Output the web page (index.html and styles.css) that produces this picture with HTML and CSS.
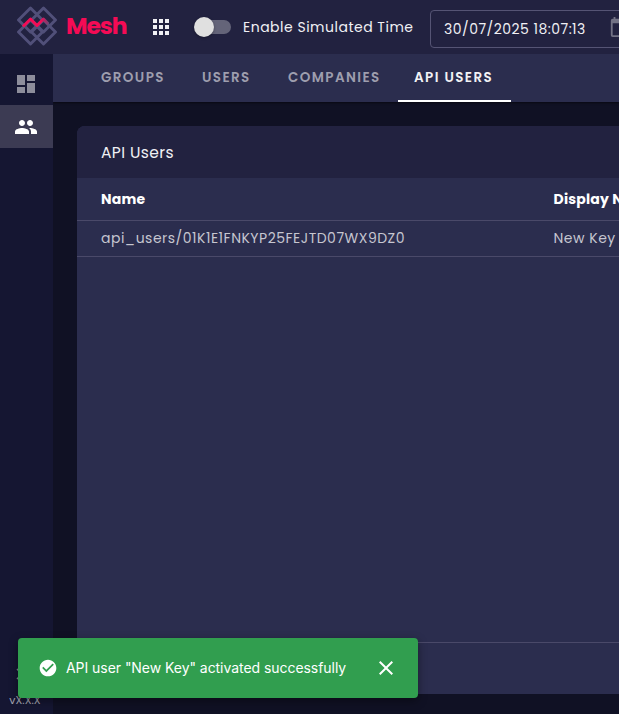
FILE: index.html
```html
<!DOCTYPE html>
<html lang="en">
<head>
<meta charset="utf-8">
<title>Mesh</title>
<link rel="stylesheet" href="styles.css">
</head>
<body>
<div class="app">
  <header class="topbar">
    <svg class="logo" viewBox="0 0 42 40" fill="none" stroke-linejoin="round">
      <defs><linearGradient id="fade" gradientUnits="userSpaceOnUse" x1="25" y1="0" x2="34" y2="0"><stop stop-color="#f50b55"/><stop offset="1" stop-color="#515079"/></linearGradient></defs>
      <g stroke="#515079" stroke-width="2.9">
        <path d="M14.500 2 26.500 14 14.500 26 2.500 14Z"/>
        <path d="M27.500 2 39.500 14 27.500 26 15.500 14Z"/>
        <path d="M14.500 14 26.500 26 14.500 38 2.500 26Z"/>
        <path d="M27.500 14 39.500 26 27.500 38 15.500 26Z"/>
      </g>
      <path d="M7 20.500 14.500 13 21 19.500 27.500 13 32.500 18" stroke="url(#fade)" stroke-width="2.9"/>
    </svg>
    <span class="brand">Mesh</span>
    <svg class="apps" viewBox="0 0 16 16" fill="#fff"><path d="M0 0h4v4H0zM6 0h4v4H6zM12 0h4v4h-4zM0 6h4v4H0zM6 6h4v4H6zM12 6h4v4h-4zM0 12h4v4H0zM6 12h4v4H6zM12 12h4v4h-4z"/></svg>
    <span class="switch"><span class="knob"></span></span>
    <span class="switch-label">Enable Simulated Time</span>
    <div class="date-field">
      <span class="date">30/07/2025 18:07:13</span>
      <svg class="calendar" viewBox="0 0 24 24"><path fill-rule="evenodd" d="M20 3h-1V1h-2v2H7V1H5v2H4Q2 3 2 5v16q0 2 2 2h16q2 0 2-2V5q0-2-2-2zM4 8h16v13H4z"/></svg>
    </div>
  </header>
  <div class="body">
    <aside class="sidebar">
      <a class="side-item"><svg viewBox="0 0 24 24"><path d="M3 13h8V3H3v10zm0 8h8v-6H3v6zm10 0h8V11h-8v10zm0-18v6h8V3h-8z"/></svg></a>
      <a class="side-item selected"><svg viewBox="0 0 24 24"><path d="M16 11c1.660 0 2.990-1.340 2.990-3S17.660 5 16 5s-3 1.340-3 3 1.340 3 3 3zm-8 0c1.660 0 2.990-1.340 2.990-3S9.660 5 8 5 5 6.340 5 8s1.340 3 3 3zm0 2c-2.330 0-7 1.170-7 3.500V19h14v-2.500c0-2.330-4.670-3.500-7-3.500zm8 0c-.29 0-.62.020-.97.050 1.160.84 1.970 1.970 1.970 3.450V19h6v-2.500c0-2.330-4.670-3.500-7-3.500z"/></svg></a>
      <div class="side-foot">
        <svg class="expand" viewBox="0 0 12 12" fill="none"><path d="m1 1 5 5-5 5M6 1l5 5-5 5"/></svg>
        <span class="version">vX.X.X</span>
      </div>
    </aside>
    <main class="main">
      <nav class="tabs">
        <a class="tab groups">GROUPS</a>
        <a class="tab users">USERS</a>
        <a class="tab companies">COMPANIES</a>
        <a class="tab api active">API USERS</a>
      </nav>
      <section class="card">
        <h1 class="card-title"><span>API Users</span></h1>
        <div class="row head"><span class="name">Name</span><span class="display">Display Name</span></div>
        <div class="row"><span class="name">api_users/01K1E1FNKYP25FEJTD07WX9DZ0</span><span class="display">New Key</span></div>
        <div class="card-foot"></div>
      </section>
    </main>
  </div>
</div>
<div class="toast">
  <svg class="check" viewBox="0 0 24 24"><path d="M12 2C6.480 2 2 6.480 2 12s4.480 10 10 10 10-4.480 10-10S17.520 2 12 2zm-2 15-5-5 1.410-1.410L10 14.170l7.590-7.590L19 8l-9 9z"/></svg>
  <span class="message">API user "New Key" activated successfully</span>
  <svg class="close" viewBox="0 0 24 24"><path d="M19 6.410 17.590 5 12 10.590 6.410 5 5 6.410 10.590 12 5 17.590 6.410 19 12 13.410 17.590 19 19 17.590 13.410 12z"/></svg>
</div>
</body>
</html>
```
FILE: styles.css
```css
* { box-sizing: border-box; }
body {
  margin: 0;
  overflow: hidden;
  background: #101124;
  color: #f0f0f4;
  font: 14px/20px Poppins, Inter, "Liberation Sans", sans-serif;
}
svg { display: block; flex: none; fill: currentColor; }
.app { width: 619px; height: 714px; display: flex; flex-direction: column; overflow: hidden; }
.topbar { height: 54px; flex: none; display: flex; align-items: center; padding-left: 16px; background: #222240; white-space: nowrap; }
.topbar > * { flex: none; }
.logo { width: 42px; height: 40px; fill: none; margin-bottom: 2px; }
.brand { width: 62px; margin-left: 8px; color: #f50b55; font-size: 23.5px; line-height: 30px; font-weight: 700; letter-spacing: -1.1px; margin-bottom: 2px; }
.apps { width: 16px; height: 16px; margin-left: 25px; }
.switch { width: 37px; height: 20px; margin-left: 25px; display: flex; align-items: center; }
.switch::after { content: ""; width: 27px; height: 14px; margin-left: -10px; border-radius: 0 7px 7px 0; background: #646479; }
.knob { width: 20px; height: 20px; flex: none; border-radius: 50%; background: #e0e0e0; box-shadow: 0 1px 3px #0005; z-index: 1; }
.switch-label { width: 171px; margin-left: 12px; letter-spacing: .5px; }
.date-field { width: 230px; height: 38px; display: flex; align-items: center; margin: 3px 0 0 16px; padding-left: 13px; border: 1px solid #555474; border-radius: 4px; }
.date { width: 143px; flex: none; letter-spacing: .48px; }
.calendar { width: 22px; height: 22px; margin: 0 0 3px 22px; color: #737386; }
.body { flex: 1; min-height: 0; display: flex; }
.sidebar { width: 53px; flex: none; display: flex; flex-direction: column; padding-top: 8px; background: #151632; }
.side-item { height: 43px; display: flex; align-items: center; padding-left: 14px; color: #8d8d9b; }
.side-item svg { width: 24px; height: 24px; }
.selected { background: #3c3b53; color: #fff; }
.side-foot { margin-top: auto; padding-bottom: 4px; text-align: center; font-size: 11px; color: #a4a4b0; }
.expand { width: 12px; height: 12px; margin: 0 0 10px 16px; fill: none; stroke: #858594; stroke-width: 1.5; }
.version { display: block; margin-right: 3px; }
.main { flex: 1; min-width: 0; overflow: hidden; background: #101124; }
.tabs { height: 48px; display: flex; padding-left: 32px; background: #2b2d4e; box-shadow: 0 1px 2px #0008; font-size: 13.5px; font-weight: 600; letter-spacing: 1.4px; color: #9e9eae; }
.tab { flex: none; height: 48px; padding: 14px 0 0 16px; white-space: nowrap; }
.groups { width: 101px; }
.users { width: 86px; }
.companies { width: 126px; }
.api { width: 113px; }
.active { color: #f2f2f5; border-bottom: 2px solid #fff; }
.card { width: 900px; height: 568px; margin: 24px 0 0 24px; display: flex; flex-direction: column; overflow: hidden; border-radius: 8px 8px 0 0; background: #2b2d4e; }
.card-title { height: 52px; margin: 0; padding: 17px 24px 15px; background: #222240; font-size: 15.5px; font-weight: 400; letter-spacing: .4px; }
.row { height: 36px; display: flex; align-items: center; padding: 0 0 1px 24px; border-bottom: 1px solid #4a4969; color: #c6c6d0; white-space: nowrap; letter-spacing: .5px; }
.head { height: 43px; padding-bottom: 0; color: #fff; font-weight: 700; letter-spacing: .2px; }
.name { width: 452.5px; flex: none; }
.card-foot { height: 52px; margin-top: auto; border-top: 1px solid #4a4969; }
.toast { position: absolute; left: 18px; top: 638px; width: 400px; height: 60px; display: flex; align-items: center; padding: 0 20px; border-radius: 4px; background: #319e4f; color: #fff; box-shadow: 0 3px 10px #0006; font-family: Inter, sans-serif; }
.check { width: 20px; height: 20px; }
.message { width: 281px; margin-left: 8px; white-space: nowrap; letter-spacing: -.05px; }
.close { width: 24px; height: 24px; margin-left: 27px; }
```
